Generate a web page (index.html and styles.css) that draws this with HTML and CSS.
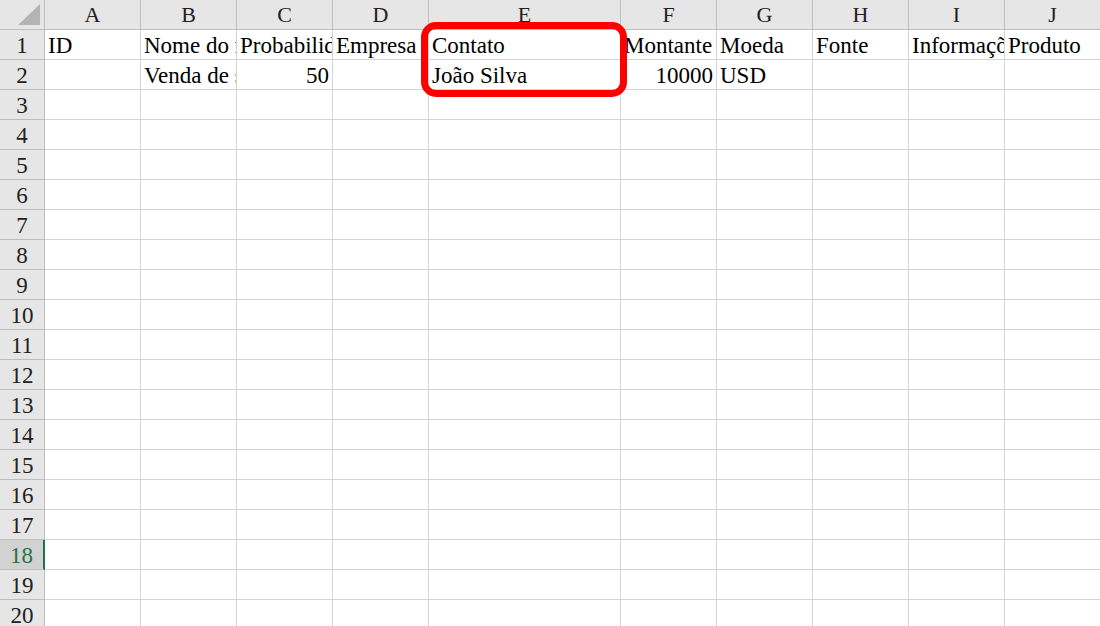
FILE: index.html
```html
<!DOCTYPE html>
<html lang="pt">
<head>
    <meta charset="UTF-8">
    <title>Planilha</title>
    <link rel="stylesheet" href="styles.css">
</head>
<body>
    <div class="sheet">
        <div class="grid">
            <div class="corner"><span class="corner-tri"></span></div>
            <div class="col-head">A</div>
            <div class="col-head">B</div>
            <div class="col-head">C</div>
            <div class="col-head">D</div>
            <div class="col-head">E</div>
            <div class="col-head">F</div>
            <div class="col-head">G</div>
            <div class="col-head">H</div>
            <div class="col-head">I</div>
            <div class="col-head">J</div>

            <div class="row-head">1</div>
            <div class="cell">ID</div>
            <div class="cell">Nome do negócio</div>
            <div class="cell">Probabilidade</div>
            <div class="cell">Empresa</div>
            <div class="cell">Contato</div>
            <div class="cell">Montante</div>
            <div class="cell">Moeda</div>
            <div class="cell">Fonte</div>
            <div class="cell">Informações</div>
            <div class="cell">Produto</div>

            <div class="row-head">2</div>
            <div class="cell"></div>
            <div class="cell">Venda de software</div>
            <div class="cell num">50</div>
            <div class="cell"></div>
            <div class="cell">João Silva</div>
            <div class="cell num">10000</div>
            <div class="cell">USD</div>
            <div class="cell"></div>
            <div class="cell"></div>
            <div class="cell"></div>
        </div>
        <div class="grid" id="emptyRows"></div>
        <div class="highlight"></div>
    </div>

    <script src="sheet.js"></script>
</body>
</html>
```

FILE: sheet.js
```js
// empty rows 3..20
var rows = document.getElementById('emptyRows');
for (var r = 3; r <= 20; r++) {
    var head = document.createElement('div');
    head.className = 'row-head' + (r === 18 ? ' active' : '');
    head.textContent = r;
    rows.appendChild(head);
    for (var c = 0; c < 10; c++) {
        var cell = document.createElement('div');
        cell.className = 'cell';
        rows.appendChild(cell);
    }
}
```

FILE: styles.css
```css
body {
    margin: 0;
    background: #ffffff;
    font-family: 'Liberation Serif', 'Times New Roman', serif;
    overflow: hidden;
}

.sheet {
    position: relative;
    width: 1100px;
    height: 626px;
    overflow: hidden;
}

.grid {
    display: grid;
    grid-template-columns: 45px repeat(4, 96px) 192px repeat(5, 96px);
    grid-auto-rows: 30px;
}

.grid > div {
    box-sizing: border-box;
    font-size: 23px;
    line-height: 29px;
    padding-top: 1px;
    white-space: nowrap;
    overflow: hidden;
}

.corner {
    position: relative;
    background: #e6e6e6;
    border-right: 1px solid #bdbdbd;
    border-bottom: 1px solid #bdbdbd;
}

.corner-tri {
    position: absolute;
    right: 4px;
    bottom: 4px;
    width: 0;
    height: 0;
    border-left: 22px solid transparent;
    border-bottom: 21px solid #b4b4b4;
}

.col-head {
    background: #e6e6e6;
    color: #222;
    text-align: center;
    border-right: 1px solid #bdbdbd;
    border-bottom: 1px solid #bdbdbd;
}

.grid > .col-head {
    font-size: 22px;
    padding-top: 0;
}

.row-head {
    background: #e6e6e6;
    color: #222;
    text-align: center;
    border-right: 1px solid #bdbdbd;
    border-bottom: 1px solid #bdbdbd;
}

.row-head.active {
    background: #d2d2d2;
    color: #217346;
    border-right: 2px solid #217346;
}

.cell {
    padding-left: 3px;
    padding-right: 3px;
    color: #000;
    border-right: 1px solid #d4d4d4;
    border-bottom: 1px solid #d4d4d4;
    text-overflow: clip;
}

.grid > .cell {
    padding-left: 3px;
    padding-right: 3px;
}

.grid > .cell.num {
    text-align: right;
    padding-right: 3px;
}

.highlight {
    position: absolute;
    left: 421px;
    top: 22px;
    width: 206px;
    height: 75px;
    box-sizing: border-box;
    border: 7px solid #ff0000;
    border-radius: 15px;
}
```
